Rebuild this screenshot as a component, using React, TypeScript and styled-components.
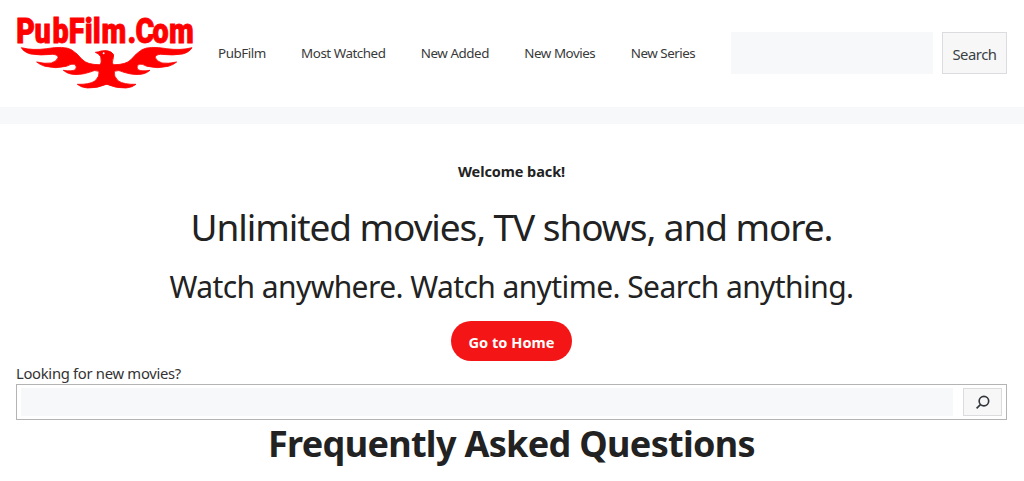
import React from 'react';
import styled, { createGlobalStyle } from 'styled-components';

const GlobalStyle = createGlobalStyle`
  *, *::before, *::after { box-sizing: border-box; }
  body {
    margin: 0;
    background: #fff;
    color: #222;
    font-family: 'Noto Sans', 'Open Sans', sans-serif;
    overflow: hidden;
  }
`;

const Header = styled.header`
  display: flex;
  align-items: center;
  height: 107px;
  padding: 0 17px 2px 16px;
`;

const Logo = styled.svg`
  display: block;
  flex: none;
  width: 178px;
  height: 82px;
  overflow: visible;
`;

const Nav = styled.nav`
  display: flex;
  gap: 35.4px;
  margin: 1px 0 0 24px;
`;

const NavLink = styled.a`
  font-size: 13.4px;
  line-height: 24px;
  white-space: nowrap;
  color: #3a3a3a;
  letter-spacing: -0.47px;
`;

const HeaderSearch = styled.form`
  display: flex;
  gap: 9px;
  margin-left: auto;
`;

const HeaderInput = styled.input`
  width: 202px;
  height: 42px;
  border: 0;
  background: #f7f8fa;
`;

const SearchButton = styled.button`
  width: 65px;
  height: 42px;
  padding: 2px 0 0;
  border: 1px solid #dcdcde;
  background: #f7f7f7;
  color: #3a3f44;
  font: 14.8px 'Noto Sans', sans-serif;
  letter-spacing: -0.45px;
`;

const Band = styled.div`
  height: 17px;
  background: #f7f8fa;
`;

const Main = styled.main`
  display: flex;
  flex-direction: column;
  align-items: center;
  padding: 35px 17px 0 16px;
`;

const Line = styled.p<{ $size: number; $height: number; $gap?: number; $track?: number; $bold?: boolean }>`
  margin: 0 0 ${(p) => p.$gap ?? 0}px;
  font-size: ${(p) => p.$size}px;
  line-height: ${(p) => p.$height}px;
  letter-spacing: ${(p) => p.$track ?? 0}px;
  font-weight: ${(p) => (p.$bold ? 700 : 400)};
  white-space: nowrap;
`;

const HomeButton = styled.a`
  display: flex;
  align-items: center;
  justify-content: center;
  width: 121px;
  height: 40px;
  padding-top: 2px;
  border-radius: 20px;
  background: #f41616;
  color: #fff;
  font-size: 14.6px;
  font-weight: 700;
`;

const SearchLabel = styled.label`
  align-self: stretch;
  height: 23px;
  font-size: 14.8px;
  line-height: 25px;
  letter-spacing: -0.3px;
  color: #333;
`;

const SearchBox = styled.form`
  display: flex;
  align-self: stretch;
  gap: 10px;
  height: 36px;
  padding: 3px 4px;
  border: 1px solid #b4b4b4;
`;

const BoxInput = styled.input`
  flex: 1;
  height: 28px;
  border: 0;
  background: #f7f8fa;
`;

const IconButton = styled.button`
  display: grid;
  place-items: center;
  width: 39px;
  height: 28px;
  padding: 0;
  border: 1px solid #dcdcde;
  background: #f7f7f7;
  color: #32373c;
`;

const LINKS = ['PubFilm', 'Most Watched', 'New Added', 'New Movies', 'New Series'];

// Left edge of each letter of the wordmark, before the horizontal squeeze.
const SQUEEZE = 0.82;
const LETTER_X = [16.2, 34.6, 52.4, 68.8, 84.8, 92.8, 101.4, 127.6, 135.6, 152.4, 169]
  .map((x) => (x / SQUEEZE).toFixed(2))
  .join(' ');

const WING =
  'M64 143 Q98 152 140 146 Q192 137 214 149 Q232 160 246 178 Q262 195 300 194 L322 190 L322 252 Q290 266 262 264 Q242 262 232 253 Q268 254 285 243 Q300 229 297 214 Q284 208 268 217 Q236 227 212 222 Q199 219 190 211 Q215 215 226 209 Q233 201 224 193 Q215 190 199 199 Q168 207 135 199 Q119 194 110 186 Q136 192 154 189 Q170 184 174 173 Q174 164 158 163 Q120 167 92 162 Q71 156 64 143 Z';

export default function App() {
  return (
    <>
      <GlobalStyle />
      <Header>
        <Logo viewBox="16 12 178 82" aria-label="PubFilm.Com">
          <text
            x={LETTER_X}
            y="43.4"
            transform={`scale(${SQUEEZE} 1)`}
            fontFamily="Roboto, sans-serif"
            fontWeight="900"
            fontSize="35"
            fill="#f00"
            stroke="#f00"
            strokeWidth="0.9"
          >
            PubFilm.Com
          </text>
          <g transform="scale(0.3333)" fill="#f00" stroke="#f00" strokeWidth="2.5" strokeLinejoin="round">
            <path d={WING} />
            <path d={WING} transform="translate(640 0) scale(-1 1)" />
            <path d="M298 204 Q307 184 302 170 Q297 161 286 157 Q297 156 303 153 Q320 149 333 156 Q345 163 340 173 Q333 186 343 204 Z" />
            <circle cx="311" cy="160" r="3" fill="#fff" stroke="none" />
          </g>
        </Logo>
        <Nav>
          {LINKS.map((l) => <NavLink key={l}>{l}</NavLink>)}
        </Nav>
        <HeaderSearch>
          <HeaderInput />
          <SearchButton type="button">Search</SearchButton>
        </HeaderSearch>
      </Header>
      <Band />
      <Main>
        <Line $size={14.5} $height={24} $gap={22} $track={-0.08} $bold>Welcome back!</Line>
        <Line $size={37} $height={44} $gap={18} $track={-1.08}>Unlimited movies, TV shows, and more.</Line>
        <Line $size={30} $height={40} $gap={14} $track={-0.58}>Watch anywhere. Watch anytime. Search anything.</Line>
        <HomeButton>Go to Home</HomeButton>
        <SearchLabel>Looking for new movies?</SearchLabel>
        <SearchBox>
          <BoxInput />
          <IconButton type="button" aria-label="Search">
            <svg width="22" height="22" viewBox="0 0 24 24" fill="none" stroke="currentColor" strokeWidth="1.8">
              <circle cx="13" cy="11" r="5.2" />
              <path d="M9.2 14.8 L5 19" />
            </svg>
          </IconButton>
        </SearchBox>
        <Line as="h2" $size={36} $height={48} $track={-0.68} $bold>Frequently Asked Questions</Line>
      </Main>
    </>
  );
}
